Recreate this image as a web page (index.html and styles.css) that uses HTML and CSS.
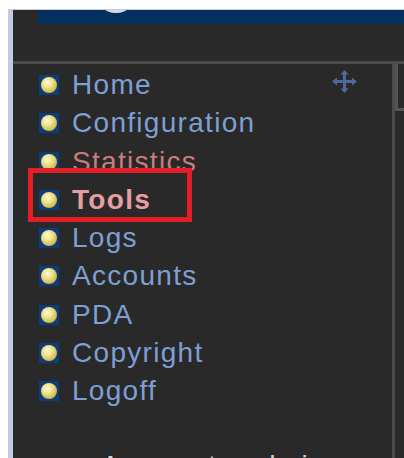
FILE: index.html
```html
<!DOCTYPE html>
<html lang="en">
<head>
<meta charset="utf-8">
<title>Admin menu</title>
<link rel="stylesheet" href="styles.css">
</head>
<body>
<div class="frame">
  <div class="banner"><div class="logo"></div></div>
  <div class="main">
    <nav class="nav">
      <span class="move" aria-hidden="true">
        <svg width="25" height="23" viewBox="0 0 25 23">
          <g fill="none" stroke="#4c6b9a" stroke-width="3">
            <line x1="4" y1="11.5" x2="21" y2="11.5"/>
            <line x1="12.5" y1="3" x2="12.5" y2="20"/>
          </g>
          <g fill="#4c6b9a">
            <polygon points="0,11.5 5,7.5 5,15.5"/>
            <polygon points="25,11.5 20,7.5 20,15.5"/>
            <polygon points="12.5,0 8.5,4.5 16.5,4.5"/>
            <polygon points="12.5,23 8.5,18.5 16.5,18.5"/>
          </g>
        </svg>
      </span>
      <ul class="menu">
        <li class="item"><span class="bullet"></span><a class="link" href="#">Home</a></li>
        <li class="item"><span class="bullet"></span><a class="link" href="#">Configuration</a></li>
        <li class="item"><span class="bullet"></span><a class="link visited" href="#">Statistics</a></li>
        <li class="item"><span class="bullet"></span><a class="link current" href="#">Tools</a></li>
        <li class="item"><span class="bullet"></span><a class="link" href="#">Logs</a></li>
        <li class="item"><span class="bullet"></span><a class="link" href="#">Accounts</a></li>
        <li class="item"><span class="bullet"></span><a class="link" href="#">PDA</a></li>
        <li class="item"><span class="bullet"></span><a class="link" href="#">Copyright</a></li>
        <li class="item"><span class="bullet"></span><a class="link" href="#">Logoff</a></li>
      </ul>
      <span class="highlight" aria-hidden="true"></span>
      <p class="footer">Access to admin</p>
    </nav>
    <aside class="side">
      <div class="knob"></div>
    </aside>
  </div>
</div>
</body>
</html>
```

FILE: styles.css
```css
html, body {
  margin: 0;
  padding: 0;
  background: #ffffff;
  height: 100%;
  overflow: hidden;
}

.frame {
  margin: 9px 0 0 8px;
  height: 449px;
  background: #292929;
  border-left: 5px solid #c3cbdf;
  border-top: 1px solid #c3cbdf;
  box-sizing: border-box;
  overflow: hidden;
}

.banner {
  margin-left: 25px;
  height: 14px;
  background: #03305f;
  overflow: hidden;
}

.logo {
  width: 42px;
  height: 42px;
  margin: -39px 0 0 57px;
  border-radius: 50%;
  background: #d6d9e0;
}

.main {
  display: flex;
  margin-top: 37px;
  border-top: 3px solid #4b4b4b;
  height: 400px;
}

.nav {
  position: relative;
  width: 379px;
  flex: none;
  font-family: "Liberation Sans", Arial, sans-serif;
  font-size: 28px;
  letter-spacing: 1.3px;
}

.menu {
  list-style: none;
  margin: 0;
  padding: 2px 0 0 26px;
}

.item {
  display: flex;
  align-items: center;
  gap: 13px;
  height: 38.25px;
}

.bullet {
  width: 20px;
  height: 20px;
  flex: none;
  background: #0d3b7c;
  display: flex;
  align-items: center;
  justify-content: center;
}

.bullet::before {
  content: "";
  width: 16px;
  height: 16px;
  border-radius: 50%;
  background: radial-gradient(circle at 40% 35%, #fffbd8 0%, #efe28a 35%, #cdb545 75%, #9a8424 100%);
}

.link {
  color: #7d9fd3;
  text-decoration: none;
  line-height: 1;
}

.link.visited {
  color: #c87c7c;
}

.link.current {
  color: #e49ea4;
  font-weight: bold;
}

.move {
  position: absolute;
  left: 319px;
  top: 6px;
  display: block;
  line-height: 0;
}

.highlight {
  position: absolute;
  left: 15px;
  top: 104px;
  width: 164px;
  height: 54px;
  border: 5px solid #e41e26;
  box-sizing: border-box;
}

.footer {
  margin: 40px 0 0 88px;
  color: #d2d2d2;
  line-height: 32px;
  white-space: nowrap;
}

.side {
  flex: 1;
  border-left: 3px solid #4b4b4b;
}

.knob {
  height: 44px;
  border-left: 3px solid #555555;
  border-bottom: 3px solid #555555;
}
```
